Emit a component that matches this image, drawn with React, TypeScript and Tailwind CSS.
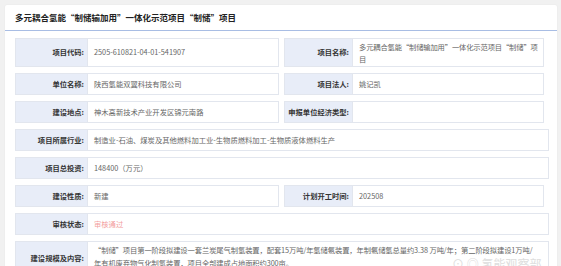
import React from "react";

const font = { fontFamily: '"Noto Sans CJK SC", "Noto Sans", sans-serif' };

function Label({ children, className = "" }: { children: React.ReactNode; className?: string }) {
  return (
    <div
      className={
        "flex items-center justify-end pr-[3px] bg-[#e8edf8] border border-[#e2e6ee] text-[7.3px] font-bold text-[#333] whitespace-nowrap " +
        className
      }
    >
      {children}
    </div>
  );
}

function Value({ children, className = "" }: { children?: React.ReactNode; className?: string }) {
  return (
    <div
      className={
        "flex items-center pl-[6px] pr-[2px] bg-white border border-l-0 border-[#e2e6ee] text-[7.3px] text-[#666] " +
        className
      }
    >
      {children}
    </div>
  );
}

function Pair({
  l1,
  v1,
  l2,
  v2,
  h = "h-[22px]",
}: {
  l1: string;
  v1: React.ReactNode;
  l2: string;
  v2?: React.ReactNode;
  h?: string;
}) {
  return (
    <div className={"grid grid-cols-[73px_191px_74px_191px] " + h}>
      <Label>{l1}</Label>
      <Value>{v1}</Value>
      <div className="ml-[5px] flex">
        <Label className="w-[74px]">{l2}</Label>
      </div>
      <Value>{v2}</Value>
    </div>
  );
}

function Full({
  label,
  children,
  h = "h-[22px]",
  vcls = "",
}: {
  label: string;
  children?: React.ReactNode;
  h?: string;
  vcls?: string;
}) {
  return (
    <div className={"grid grid-cols-[73px_461px] " + h}>
      <Label>{label}</Label>
      <Value className={vcls}>{children}</Value>
    </div>
  );
}

export default function App() {
  return (
    <div
      className="relative w-[561px] h-[266px] overflow-hidden bg-[#f1f1f1] pt-[5px] pl-[5px]"
      style={font}
    >
      <div className="w-[552px] h-[300px] bg-white rounded-[2px] shadow-[0_0_2px_rgba(0,0,0,0.06)]">
        <div className="h-[26px] flex items-center pl-[10px] border-b border-[#a8bde4] text-[8.5px] font-bold text-[#222]">
          多元耦合氢能“制储输加用”一体化示范项目“制储”项目
        </div>
        <div className="pl-[10px] pr-[8px] pt-[7px] flex flex-col gap-[6px]">
          <div className="grid grid-cols-[73px_191px_74px_191px] h-[29px]">
            <Label>项目代码:</Label>
            <Value>2505-610821-04-01-541907</Value>
            <div className="ml-[5px] flex">
              <Label className="w-[74px]">项目名称:</Label>
            </div>
            <Value className="leading-[12px] pl-[5px] pr-[1px] tracking-[-0.15px]">
              多元耦合氢能“制储输加用”一体化示范项目“制储”项目
            </Value>
          </div>
          <Pair l1="单位名称:" v1="陕西氢能双翼科技有限公司" l2="项目法人:" v2="姚记凯" />
          <Pair l1="建设地点:" v1="神木高新技术产业开发区锦元南路" l2="申报单位经济类型:" v2="" />
          <Full label="项目所属行业:">制造业-石油、煤炭及其他燃料加工业-生物质燃料加工-生物质液体燃料生产</Full>
          <Full label="项目总投资:">148400（万元）</Full>
          <Pair l1="建设性质:" v1="新建" l2="计划开工时间:" v2="202508" />
          <Full label="审核状态:" vcls="text-[#f3a0a0]">审核通过</Full>
          <Full label="建设规模及内容:" h="h-[34px]" vcls="leading-[13px] items-start pt-[2px] pl-[5px] pr-[9px] tracking-[-0.1px]">
            “制储”项目第一阶段拟建设一套兰炭尾气制氢装置，配套15万吨/年氢储氨装置，年制氨储氢总量约3.38 万吨/年；第二阶段拟建设1万吨/年有机废弃物气化制氢装置，项目全部建成占地面积约300亩。
          </Full>
        </div>
      </div>
      <div className="absolute left-[452px] top-[257px] text-[12px] leading-[14px] text-[#d6d6d6] whitespace-nowrap opacity-80">
        ⊙ ◎ 氢能观察部
      </div>
    </div>
  );
}
